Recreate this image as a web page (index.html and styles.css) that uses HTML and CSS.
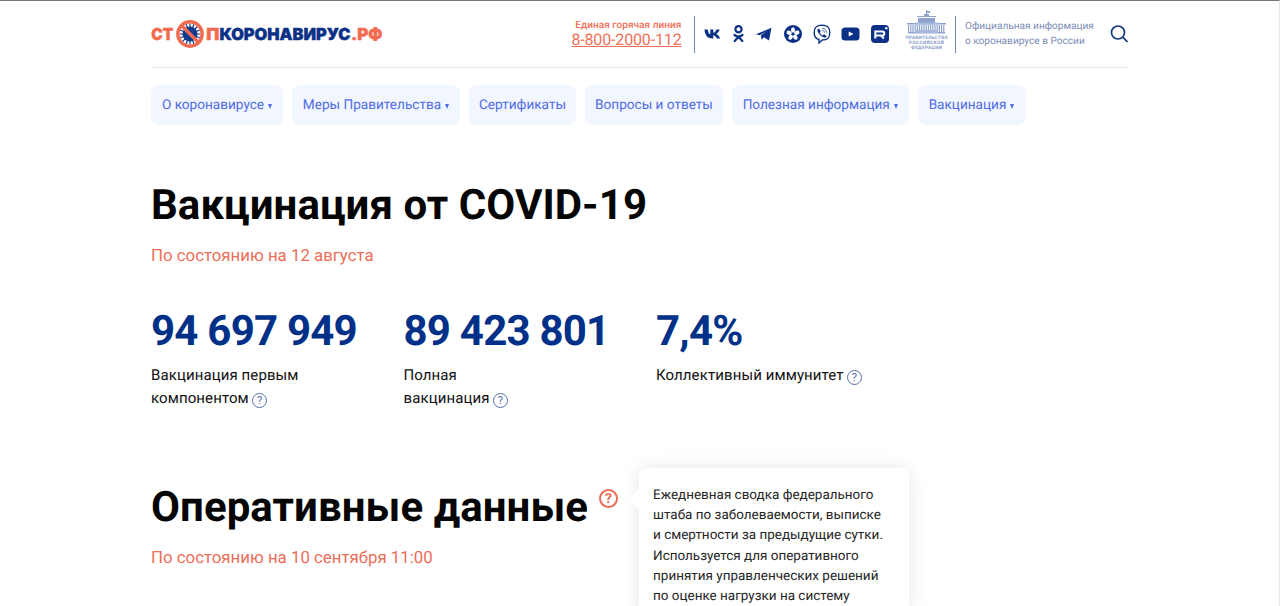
FILE: index.html
```html
<!DOCTYPE html>
<html lang="ru">
<head>
<meta charset="utf-8">
<title>Стопкоронавирус.рф</title>
<link rel="stylesheet" href="styles.css">
</head>
<body>
<div class="page">
  <header class="header">
    <a class="logo" aria-label="Стопкоронавирус.рф">
      <svg width="234" height="30" viewBox="0 0 234 30">
        <g class="logo-text">
          <text class="coral" x="0.300" y="20.700" textLength="22" lengthAdjust="spacingAndGlyphs">СТ</text>
          <text class="coral" x="55.300" y="20.700" textLength="13" lengthAdjust="spacingAndGlyphs">П</text>
          <text class="navy" x="68.500" y="20.700" textLength="131" lengthAdjust="spacingAndGlyphs">КОРОНАВИРУС</text>
          <text class="coral" x="200" y="20.700" textLength="31.500" lengthAdjust="spacingAndGlyphs">.РФ</text>
        </g>
        <g transform="translate(39 15)">
          <circle r="7.500" fill="#123a8d"/>
          <path d="M0-10.500V10.500M-10.500 0H10.500M-7.500-7.500L7.500 7.500M-7.500 7.500L7.500-7.500M-4-10L4 10M-10 4L10-4M4-10L-4 10M-10-4L10 4" stroke="#123a8d" stroke-width="1.200"/>
          <circle r="12.200" fill="none" stroke="#f26b50" stroke-width="3.400"/>
          <path d="M-8.500-8.500L8.500 8.500" stroke="#f26b50" stroke-width="3.600"/>
        </g>
      </svg>
    </a>
    <div class="hotline">
      <span class="hotline-label">Единая горячая линия</span>
      <a class="hotline-phone">8-800-2000-112</a>
    </div>
    <div class="socials">
      <svg width="17" height="20" viewBox="0 0 17 20"><path d="M.5 5.500h3.300c.2 2.600 1.200 4.200 2.500 4.800V5.500h3v3.300c1.500-.3 2.500-1.600 3.100-3.300h3.200c-.5 2-1.700 3.500-3.200 4.400 1.600.8 3 2.200 3.700 4.600h-3.400c-.6-1.700-1.700-2.900-3.400-3.200v3.200h-.7C3.600 14.500.8 11.200.5 5.500z"/></svg>
      <svg width="13" height="20" viewBox="0 0 13 20"><g fill="none" stroke="#0b3186" stroke-width="2.200" stroke-linecap="round"><circle cx="6.500" cy="5.200" r="3.100"/><path d="M2.500 11c2.500 1.900 5.500 1.900 8 0M6.500 12.800L2.700 17M6.500 12.800L10.300 17"/></g></svg>
      <svg width="17" height="20" viewBox="0 0 17 20"><path d="M.8 10.300L16.500 3.800 14 16.500 9 13.300l-2.400 2.500-.7-4.600L12.500 6.800 4.700 11.200z"/></svg>
      <svg width="19" height="20" viewBox="0 0 19 20"><circle cx="10" cy="10" r="9"/><g fill="#fff" transform="translate(10 10)"><ellipse cy="-4" rx="2" ry="2.700"/><ellipse cy="-4" rx="2" ry="2.700" transform="rotate(72)"/><ellipse cy="-4" rx="2" ry="2.700" transform="rotate(144)"/><ellipse cy="-4" rx="2" ry="2.700" transform="rotate(216)"/><ellipse cy="-4" rx="2" ry="2.700" transform="rotate(288)"/></g></svg>
      <svg width="18" height="20" viewBox="0 0 18 20"><path d="M9 1.200c5.800 0 7.800 2 7.800 7.500S14.500 16 9.200 16l-3.200 3v-3.500C2.500 14.600 1.200 13 1.200 8.700 1.200 3.200 3.200 1.200 9 1.200z" fill="none" stroke="#0b3186" stroke-width="1.400"/><path d="M5.800 4.500l2 2.500-1 1.500c.6 1.500 1.500 2.400 2.900 3l1.300-1.200 2.500 1.800c-.3 1.200-1.100 1.900-2.300 1.500C7.800 12.300 5.500 10 4.400 6.800c-.2-1 .4-1.800 1.400-2.300z"/><path d="M9 4.300c2.800.1 4.400 1.700 4.500 4.500M9.300 6.400c1.400.1 2.100.8 2.200 2.200" fill="none" stroke="#0b3186" stroke-width=".7"/></svg>
      <svg width="19" height="20" viewBox="0 0 19 20"><rect x=".5" y="3.500" width="18" height="13" rx="3.500"/><path d="M7.700 7.400L12.500 10l-4.800 2.600z" fill="#fff"/></svg>
      <svg width="19" height="20" viewBox="0 0 19 20"><rect x="0" y="1" width="18" height="18" rx="4"/><path d="M4.300 14.500v-7h7c1.500 0 2 .6 2 2s-.5 2-2 2h-7M10.100 11.500l2.700 3" fill="none" stroke="#fff" stroke-width="2"/><circle cx="15.300" cy="4.200" r="1.200" fill="#fff"/></svg>
    </div>
    <div class="government">
      <svg class="crest" width="43" height="42" viewBox="0 0 43 42">
        <g fill="#8ea4cf">
          <path d="M21 0h1v4h-1zM22 1h3v2h-3zM19 4h5v2h-5zM12 6h19v1H12zM13 8h17v5H13z"/>
          <path d="M2 13h39v1.500H2zM3 22h37v1.500H3z"/>
        </g>
        <path d="M3 18.500H40" stroke="#8ea4cf" stroke-width="7" stroke-dasharray="1.200 1"/>
        <path d="M10 12.500h23v2H10zM10 20h23v3H10z" fill="#a8b8da"/>
        <g class="crest-text" text-anchor="middle">
          <text x="21.500" y="28.700" textLength="42">ПРАВИТЕЛЬСТВО</text>
          <text x="21.500" y="33.900" textLength="35">РОССИЙСКОЙ</text>
          <text x="21.500" y="39.100" textLength="31">ФЕДЕРАЦИИ</text>
        </g>
      </svg>
      <p class="official">Официальная информация<br>о коронавирусе в России</p>
    </div>
    <svg class="search" width="18" height="18" viewBox="0 0 18 18"><circle cx="8" cy="7.500" r="6.500"/><path d="M12.700 12.200L17.500 17"/></svg>
  </header>

  <nav class="nav">
    <a class="nav-item w1">О коронавирусе<i></i></a>
    <a class="nav-item w2">Меры Правительства<i></i></a>
    <a class="nav-item w3">Сертификаты</a>
    <a class="nav-item w4">Вопросы и ответы</a>
    <a class="nav-item w5">Полезная информация<i></i></a>
    <a class="nav-item w6">Вакцинация<i></i></a>
  </nav>

  <main>
    <section class="vaccination">
      <h1 class="title">Вакцинация от COVID-19</h1>
      <p class="date">По состоянию на 12 августа</p>
      <div class="stats">
        <div class="stat"><div class="value">94 697 949</div><p class="label">Вакцинация первым<br>компонентом <span class="hint">?</span></p></div>
        <div class="stat"><div class="value">89 423 801</div><p class="label">Полная<br>вакцинация <span class="hint">?</span></p></div>
        <div class="stat"><div class="value">7,4%</div><p class="label">Коллективный иммунитет <span class="hint">?</span></p></div>
      </div>
    </section>
    <section class="operational">
      <h2 class="title">Оперативные данные<span class="help">?
        <span class="tooltip">Ежедневная сводка федерального<br>штаба по заболеваемости, выписке<br>и смертности за предыдущие сутки.<br>Используется для оперативного<br>принятия управленческих решений<br>по оценке нагрузки на систему</span></span></h2>
      <p class="date">По состоянию на 10 сентября 11:00</p>
    </section>
  </main>
</div>
</body>
</html>
```

FILE: styles.css
```css
* { box-sizing: border-box; }
body {
  margin: 0;
  height: 606px;
  overflow: hidden;
  border-top: 1px solid #777;
  border-right: 1px solid #e6e6e6;
  background: #fff;
  color: #111;
  font-family: Roboto, "Liberation Sans", sans-serif;
  text-rendering: geometricPrecision;
}
p, h1, h2 { margin: 0; }
.page { width: 977px; margin-left: 151px; }

.header {
  display: flex;
  align-items: center;
  height: 67px;
  border-bottom: 1px solid #e7e7e7;
}
.logo { display: flex; width: 420px; padding-bottom: 1px; }
.logo-text { font: 900 16.5px Inter, sans-serif; }
.coral { fill: #f26b50; stroke: #f26b50; stroke-width: .4px; }
.navy { fill: #0b3186; stroke: #0b3186; stroke-width: .4px; }
.hotline {
  display: flex;
  flex-direction: column;
  align-items: flex-end;
  width: 124px;
  height: 37px;
  padding-right: 12.5px;
  border-right: 1px solid #7188b8;
  color: #ef6f58;
  white-space: nowrap;
}
.hotline-label { padding-top: 3px; font-size: 10px; font-weight: 500; line-height: 13px; letter-spacing: .07px; }
.hotline-phone { font-size: 16px; line-height: 16px; text-decoration: underline; letter-spacing: -.15px; }
.socials {
  display: flex;
  align-items: center;
  justify-content: space-between;
  width: 186px;
  margin-left: 9px;
  fill: #0b3186;
}
.government { display: flex; align-items: center; margin-left: 15px; }
.crest { margin-bottom: 6px; }
.crest-text { font: 700 4.5px Roboto, sans-serif; fill: #8197c5; }
.official {
  height: 37px;
  margin-left: 7px;
  padding: 3px 0 0 9px;
  border-left: 1px solid #7188b8;
  color: #7c8db5;
  font-size: 10.1px;
  line-height: 15px;
  white-space: nowrap;
}
.search { margin-left: auto; fill: none; stroke: #16377d; stroke-width: 1.7; }

.nav { display: flex; gap: 9px; padding-top: 17px; }
.nav-item {
  display: flex;
  align-items: center;
  justify-content: center;
  height: 40px;
  border-radius: 8px;
  background: #f1f6ff;
  color: #506be5;
  font-size: 13.6px;
  white-space: nowrap;
}
.nav-item i {
  margin: 3px 0 0 4px;
  border: solid transparent;
  border-width: 5px 2.5px 0;
  border-top-color: #506be5;
}
.w1 { width: 132px; }
.w2 { width: 168px; }
.w3 { width: 107px; }
.w4 { width: 138px; }
.w5 { width: 176.500px; }
.w6 { width: 108px; }

.vaccination { padding-top: 56px; }
.title { color: #050505; font-size: 42px; font-weight: 700; line-height: 50px; letter-spacing: .07px; white-space: nowrap; }
.date { margin-top: 13px; color: #eb6f59; font-size: 16.83px; line-height: 24px; }
.stats { display: grid; grid-template-columns: repeat(3, 252.5px); margin-top: 39px; }
.value { color: #003087; font-size: 42px; font-weight: 700; line-height: 50px; letter-spacing: -.77px; }
.label { height: 46px; margin-top: 7px; font-size: 15px; line-height: 23px; letter-spacing: .1px; white-space: nowrap; }
.hint {
  display: inline-block;
  width: 15px;
  height: 15px;
  margin-left: -.5px;
  border: 1px solid #5570ac;
  border-radius: 50%;
  color: #5570ac;
  font-size: 11px;
  line-height: 13px;
  letter-spacing: 0;
  text-align: center;
  vertical-align: -1px;
}
.operational { padding-top: 73px; }
.help {
  display: inline-block;
  position: relative;
  width: 19px;
  height: 19px;
  margin-left: 11px;
  border: 2px solid #ec6b54;
  border-radius: 50%;
  color: #ec6b54;
  font-size: 14px;
  line-height: 16px;
  letter-spacing: 0;
  text-align: center;
  vertical-align: 18px;
}
.operational .title { height: 50px; }
.tooltip {
  position: absolute;
  top: -23px;
  left: 38px;
  width: 270px;
  height: 150px;
  padding: 18px 14px;
  border-radius: 8px;
  background: #fff;
  box-shadow: 0 0 18px rgba(0, 0, 0, .1);
  color: #252525;
  font-size: 13.47px;
  font-weight: 400;
  line-height: 20.2px;
  text-align: left;
}
.tooltip::before {
  content: "";
  position: absolute;
  top: 19px;
  left: -11px;
  border: solid transparent;
  border-width: 12px 12px 12px 0;
  border-right-color: #fff;
}
```
